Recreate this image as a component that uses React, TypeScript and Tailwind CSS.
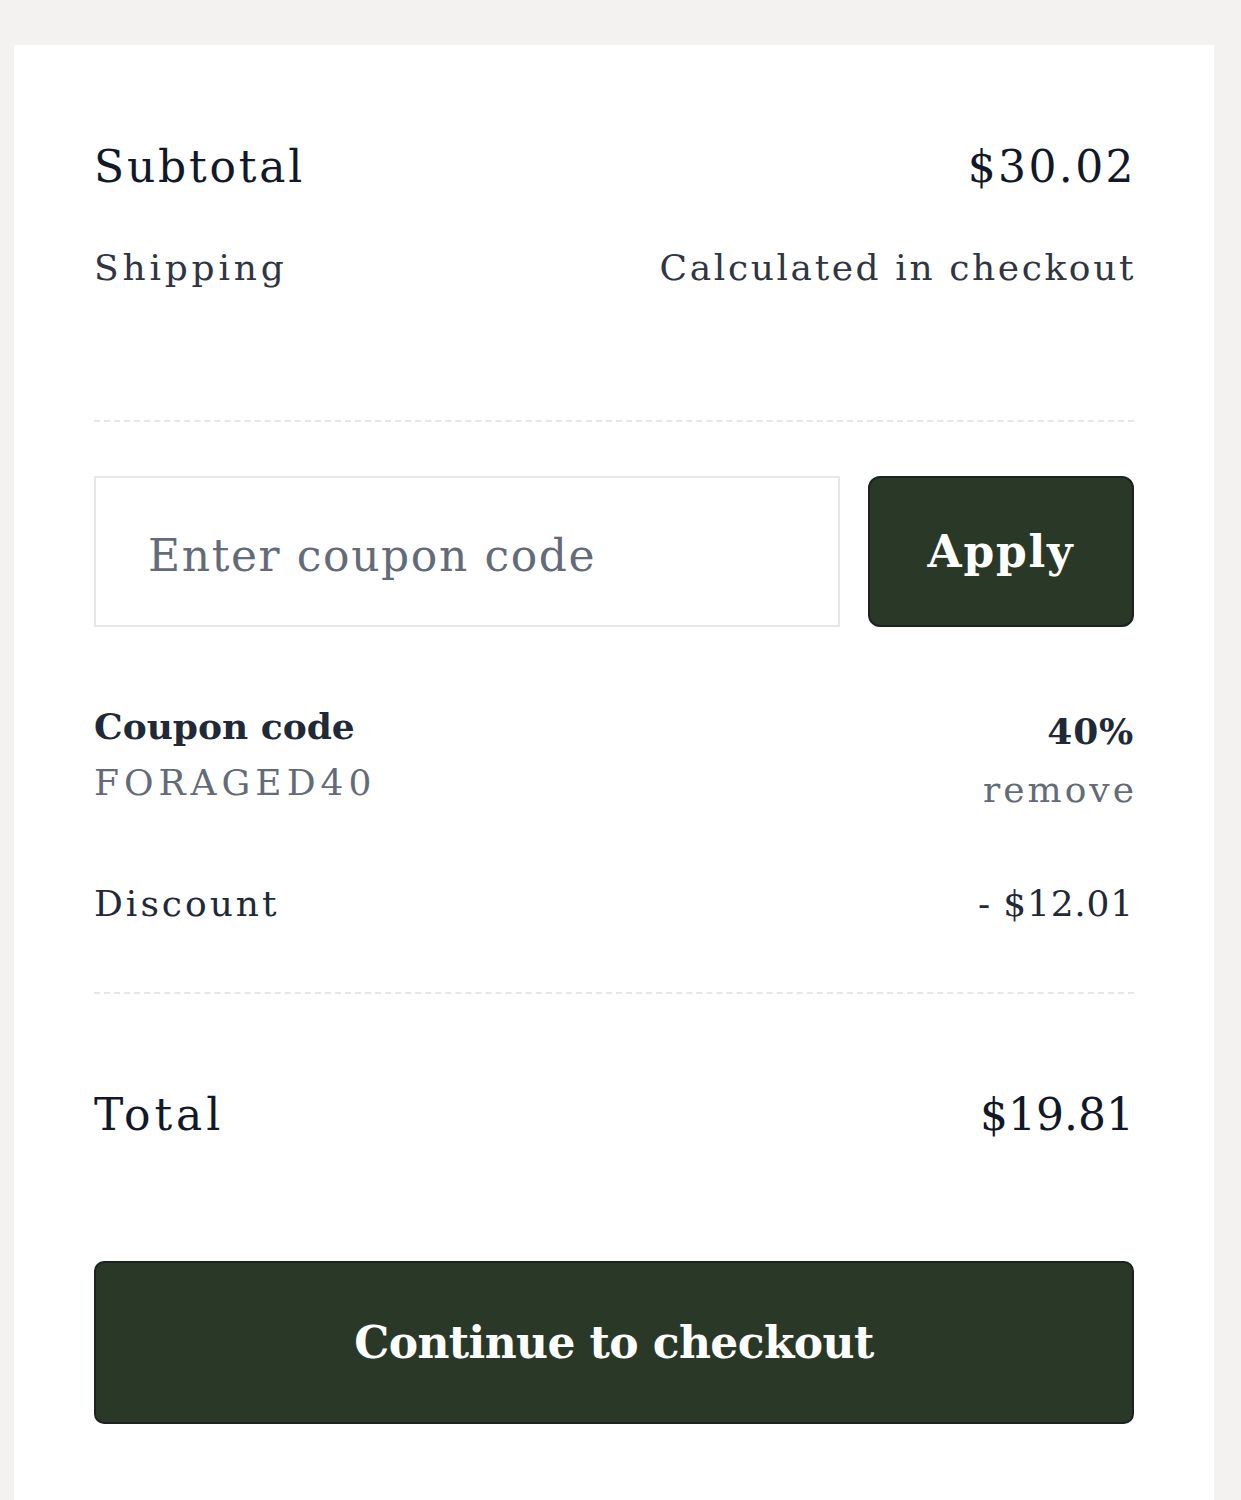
const serif = "font-['DejaVu_Serif',serif]";

function Row({
  label,
  value,
  className,
  labelClass = '',
  valueClass = '',
}: {
  label: string;
  value: string;
  className: string;
  labelClass?: string;
  valueClass?: string;
}) {
  return (
    <div className={`flex items-center justify-between ${className}`}>
      <span className={labelClass}>{label}</span>
      <span className={valueClass}>{value}</span>
    </div>
  );
}

export default function App() {
  return (
    <div className={`min-h-[1500px] bg-[#f3f2f0] pl-[14px] pr-[27px] pt-[45px] ${serif}`}>
      <div className="min-h-[1455px] bg-white px-[80px] pt-[92px]">
        <Row
          label="Subtotal"
          value="$30.02"
          className="text-[44px] leading-[60px] text-[#111827]"
          labelClass="tracking-[2.8px]"
          valueClass="tracking-[2.4px] -mr-[2px]"
        />
        <Row
          label="Shipping"
          value="Calculated in checkout"
          className="mt-[41px] text-[36px] leading-[60px] text-[#2f3542]"
          labelClass="tracking-[3.8px]"
          valueClass="tracking-[2.6px] -mr-[2px]"
        />

        <div className="mt-[122px] border-t-2 border-dashed border-[#e5e7eb]" />

        <div className="mt-[54px] flex gap-[28px]">
          <input
            type="text"
            placeholder="Enter coupon code"
            className="h-[151px] min-w-0 flex-1 border-2 border-[#e5e7eb] bg-white px-[52px] pt-[8px] text-[44px] tracking-[1.6px] text-[#111827] outline-none placeholder:text-[#646b78]"
          />
          <button className="h-[151px] w-[266px] rounded-[12px] border-2 border-[#1b2220] bg-[#2a3927] text-[44px] font-bold tracking-[1.8px] text-white">
            Apply
          </button>
        </div>

        <div className="mt-[74px] flex items-start justify-between">
          <div className="flex flex-col gap-[7px]">
            <span className="text-[36px] font-bold leading-[50px] text-[#1f2937]">Coupon code</span>
            <span className="text-[36px] leading-[50px] tracking-[5px] text-[#646b78]">FORAGED40</span>
          </div>
          <div className="mt-[5px] flex flex-col items-end gap-[9px]">
            <span className="text-[36px] font-bold leading-[50px] tracking-[0.8px] text-[#1f2937]">40%</span>
            <button className="-mr-[3px] text-[36px] leading-[50px] tracking-[3px] text-[#646b78]">remove</button>
          </div>
        </div>

        <Row
          label="Discount"
          value="- $12.01"
          className="mt-[64px] text-[36px] leading-[50px] text-[#1f2937]"
          labelClass="tracking-[3px]"
          valueClass="tracking-[0.8px]"
        />

        <div className="mt-[63px] border-t-2 border-dashed border-[#e5e7eb]" />

        <Row
          label="Total"
          value="$19.81"
          className="mt-[91px] text-[44px] leading-[60px] text-[#111827]"
          labelClass="tracking-[4px]"
        />

        <button className="mt-[116px] h-[163px] w-full rounded-[10px] border-2 border-[#1b2220] bg-[#2a3927] text-[44px] font-bold tracking-[-0.6px] text-white">
          Continue to checkout
        </button>
      </div>
    </div>
  );
}
